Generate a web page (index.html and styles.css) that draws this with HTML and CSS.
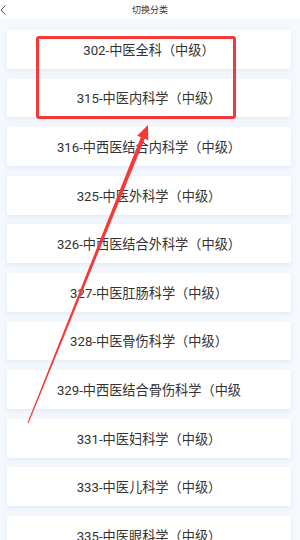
FILE: index.html
```html
<!DOCTYPE html>
<html lang="zh">
<head>
    <meta charset="UTF-8">
    <meta name="viewport" content="width=device-width, initial-scale=1.0">
    <title>切换分类</title>
    <link rel="stylesheet" href="styles.css">
</head>
<body>
    <header class="topbar">
        <svg class="back" width="8" height="12" viewBox="0 0 8 12">
            <path d="M5.5 1.5 L1 6 L5.5 10.5" fill="none" stroke="#555" stroke-width="1"/>
        </svg>
        <h1>切换分类</h1>
    </header>

    <main class="list">
        <div class="item">302-中医全科（中级）</div>
        <div class="item">315-中医内科学（中级）</div>
        <div class="item">316-中西医结合内科学（中级）</div>
        <div class="item">325-中医外科学（中级）</div>
        <div class="item">326-中西医结合外科学（中级）</div>
        <div class="item">327-中医肛肠科学（中级）</div>
        <div class="item">328-中医骨伤科学（中级）</div>
        <div class="item">329-中西医结合骨伤科学（中级</div>
        <div class="item">331-中医妇科学（中级）</div>
        <div class="item">333-中医儿科学（中级）</div>
        <div class="item">335-中医眼科学（中级）</div>
    </main>

    <!-- annotation drawn over the screenshot -->
    <div class="mark"></div>
    <svg class="arrow" width="300" height="540" viewBox="0 0 300 540">
        <polygon fill="#f73838"
            points="148,125 148.3,140.2 144.8,138.8 28.5,423.2 27.5,422.8 140.8,137.2 137.2,135.8"/>
    </svg>
</body>
</html>
```

FILE: styles.css
```css
body {
    margin: 0;
    padding: 0;
    width: 300px;
    height: 540px;
    overflow: hidden;
    position: relative;
    background-color: #f5f8fd;
    font-family: Roboto, "Noto Sans CJK SC", sans-serif;
    color: #333333;
}

.topbar {
    height: 19px;
    background-color: #ffffff;
    display: flex;
    align-items: center;
    justify-content: center;
    position: relative;
}

.topbar h1 {
    margin: 0;
    font-size: 9px;
    font-weight: normal;
    color: #333333;
}

.back {
    position: absolute;
    left: 0;
    top: 4px;
}

.list {
    display: flex;
    flex-direction: column;
    gap: 9.8px;
    padding: 11px 9px 0 7px;
}

.item {
    height: 38.8px;
    flex-shrink: 0;
    background-color: #ffffff;
    border-radius: 2px;
    box-shadow: 0 2px 5px rgba(190, 210, 240, 0.35);
    display: flex;
    align-items: center;
    justify-content: center;
    font-size: 13.2px;
    white-space: nowrap;
}

.mark {
    position: absolute;
    left: 36px;
    top: 36px;
    width: 200px;
    height: 83px;
    box-sizing: border-box;
    border: 3.5px solid #f23a3a;
    border-radius: 3px;
}

.arrow {
    position: absolute;
    left: 0;
    top: 0;
}
```
